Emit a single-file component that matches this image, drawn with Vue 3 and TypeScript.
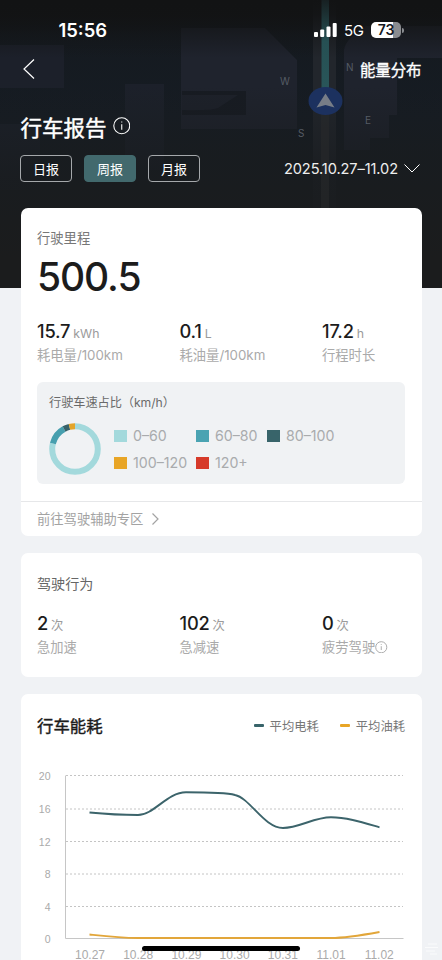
<script setup lang="ts">
interface Stat {
  value: string
  unit: string
  label: string
  info?: boolean
}

const periods = ['日报', '周报', '月报']
const active = '周报'

const mileage: Stat[] = [
  { value: '15.7', unit: 'kWh', label: '耗电量/100km' },
  { value: '0.1', unit: 'L', label: '耗油量/100km' },
  { value: '17.2', unit: 'h', label: '行程时长' },
]

const behaviour: Stat[] = [
  { value: '2', unit: '次', label: '急加速' },
  { value: '102', unit: '次', label: '急减速' },
  { value: '0', unit: '次', label: '疲劳驾驶', info: true },
]

const speeds = [
  { label: '0–60', tone: 'pale' },
  { label: '60–80', tone: 'teal' },
  { label: '80–100', tone: 'deep' },
  { label: '100–120', tone: 'amber' },
  { label: '120+', tone: 'red' },
]

const ring = [
  { tone: 'pale', length: 79, start: 0 },
  { tone: 'teal', length: 13, start: 79 },
  { tone: 'deep', length: 4, start: 92 },
  { tone: 'amber', length: 4, start: 96 },
]

const ticks = [
  { label: '20', y: 15.5 },
  { label: '16', y: 49 },
  { label: '12', y: 81.5 },
  { label: '8', y: 114 },
  { label: '4', y: 146.5 },
  { label: '0', y: 178.5 },
]

const days = ['10.27', '10.28', '10.29', '10.30', '10.31', '11.01', '11.02']
const dayX = (i: number) => 69 + i * 48.2
</script>

<template>
  <div class="screen">
    <header class="hero">
      <svg class="map" viewBox="0 0 442 288" aria-hidden="true">
        <defs>
          <linearGradient id="shade" x1="0" y1="0" x2="0" y2="1">
            <stop offset="0" stop-color="#121314" />
            <stop offset="0.12" stop-color="#151a20" />
            <stop offset="0.4" stop-color="#161c23" />
            <stop offset="0.65" stop-color="#181c20" />
            <stop offset="1" stop-color="#1c1c1d" />
          </linearGradient>
          <linearGradient id="fade" x1="0" y1="0" x2="0" y2="1">
            <stop offset="0" stop-color="#121314" />
            <stop offset="0.05" stop-color="#121314" stop-opacity=".9" />
            <stop offset="0.2" stop-color="#121314" stop-opacity="0" />
            <stop offset="0.3" stop-color="#191c1f" stop-opacity="0" />
            <stop offset="0.62" stop-color="#191c1f" stop-opacity=".85" />
            <stop offset="0.9" stop-color="#1b1c1d" stop-opacity="1" />
          </linearGradient>
          <linearGradient id="route" x1="0" y1="0" x2="0" y2="1">
            <stop offset="0" stop-color="#172022" />
            <stop offset="0.45" stop-color="#265053" />
            <stop offset="1" stop-color="#29565a" />
          </linearGradient>
        </defs>
        <rect width="442" height="288" fill="url(#shade)" />
        <g fill="#1f232d">
          <path d="M0 45H64V88H0zM125 84H164V170H125zM0 124H40V190H0z" opacity=".75" />
          <path d="M181 28H265L297 60V129H181z" />
          <path d="M344 50Q345 39 366 26H442V58H397V115H389V138H370V150H344z" />
        </g>
        <path d="M182 91H246V115H182z" fill="#171b22" />
        <path d="M182 95H238L218 108Q210 111 182 110z" fill="#1d212a" />
        <path d="M313 0H336V288H313z" fill="#22262c" />
        <rect width="442" height="288" fill="url(#fade)" />
        <path d="M321.500 0H329V92H321.500z" fill="url(#route)" />
        <path d="M321 114H329V208H321z" fill="#28292c" opacity=".6" />
        <ellipse cx="325.500" cy="101" rx="17" ry="14" fill="#1c315f" />
        <path d="M325.500 93.500L334.500 107.500L325.500 105L316.500 107.500z" fill="#777d87" />
        <g class="compass">
          <text x="280" y="85">W</text>
          <text x="346" y="71">N</text>
          <text x="298" y="137">S</text>
          <text x="365" y="124">E</text>
        </g>
      </svg>

      <div class="status">
        <span class="clock">15:56</span>
        <svg class="signal" viewBox="0 0 23 14">
          <rect x="0" y="9" width="4" height="5" rx="1" />
          <rect x="6.200" y="6.500" width="4" height="7.500" rx="1" />
          <rect x="12.500" y="3.500" width="4" height="10.500" rx="1" />
          <rect x="18.700" y="0" width="4" height="14" rx="1" />
        </svg>
        <span class="network">5G</span>
        <span class="battery">73</span>
        <span class="cap"></span>
      </div>

      <nav class="nav">
        <svg class="back" viewBox="0 0 12 20"><path d="M11 .500L1 10L11 19.500" /></svg>
        <span class="nav-link">能量分布</span>
      </nav>

      <div class="heading">
        <h1>行车报告</h1>
        <svg class="info light" viewBox="0 0 18 18">
          <circle cx="9" cy="9" r="8.200" />
          <path d="M9 4.500V5.700M9 7.500V13" />
        </svg>
      </div>

      <div class="filters">
        <button v-for="p in periods" :key="p" class="pill" :class="{ on: p === active }">{{ p }}</button>
        <span class="range">2025.10.27–11.02</span>
        <svg class="down" viewBox="0 0 16 9"><path d="M.500 .500L8 8L15.500 .500" /></svg>
      </div>
    </header>

    <main class="cards">
      <section class="card distance">
        <div class="caption">行驶里程</div>
        <div class="total">500.5</div>
        <div class="stats">
          <div v-for="s in mileage" :key="s.label" class="stat">
            <div class="figure"><b>{{ s.value }}</b><span>{{ s.unit }}</span></div>
            <div class="label">{{ s.label }}</div>
          </div>
        </div>
        <div class="panel">
          <div class="panel-title">行驶车速占比（km/h）</div>
          <div class="share">
            <svg class="donut" viewBox="0 0 52 52">
              <circle
                v-for="r in ring"
                :key="r.tone"
                :class="r.tone"
                cx="26"
                cy="26"
                r="22.800"
                pathLength="100"
                :stroke-dasharray="`${r.length} ${100 - r.length}`"
                :stroke-dashoffset="-r.start"
              />
            </svg>
            <div class="keys">
              <div v-for="s in speeds" :key="s.label" class="key">
                <i :class="s.tone"></i><span>{{ s.label }}</span>
              </div>
            </div>
          </div>
        </div>
        <div class="more">
          <span>前往驾驶辅助专区</span>
          <svg viewBox="0 0 7 12"><path d="M.500 .500L6 6L.500 11.500" /></svg>
        </div>
      </section>

      <section class="card behaviour">
        <h2>驾驶行为</h2>
        <div class="stats">
          <div v-for="s in behaviour" :key="s.label" class="stat">
            <div class="figure"><b>{{ s.value }}</b><span>{{ s.unit }}</span></div>
            <div class="label">
              {{ s.label }}<svg v-if="s.info" class="info" viewBox="0 0 18 18">
                <circle cx="9" cy="9" r="8" />
                <path d="M9 4.500V5.700M9 7.500V13" />
              </svg>
            </div>
          </div>
        </div>
      </section>

      <section class="card energy">
        <div class="energy-head">
          <h3>行车能耗</h3>
          <span class="series"><i class="deep"></i>平均电耗</span>
          <span class="series"><i class="amber"></i>平均油耗</span>
        </div>
        <svg class="chart" viewBox="0 0 401 206">
          <g v-for="t in ticks" :key="t.label">
            <line v-if="t.label !== '0'" class="grid" x1="45" x2="382" :y1="t.y" :y2="t.y" />
            <text class="tick" x="29.500" :y="t.y + 4">{{ t.label }}</text>
          </g>
          <path class="axis" d="M44.500 15.500V178.500H382.500" />
          <path class="line fuel" d="M68.500 174.500C82 176 98 178 117 178H310C325 178 342 175 358.500 172" />
          <path
            class="line power"
            d="M68.500 52.500C84 54 100 55 117 55C133 55 146 32.300 165 32.300C182 32.300 205 32.500 214 35C229 38 243 68 262 68C278 68 293 57.300 310 57.300C326 57.300 342 62.500 358.500 67.300"
          />
          <text v-for="(d, i) in days" :key="d" class="day" :x="dayX(i)" y="198.500">{{ d }}</text>
        </svg>
      </section>
    </main>

    <svg class="corner" viewBox="0 0 14 12"><path d="M3 1H12M0 4.500H13M1 8H10M5 11H12" /></svg>
    <div class="home"></div>
  </div>
</template>

<style>
body {
  margin: 0;
  overflow: hidden;
}
</style>

<style scoped>
.screen {
  position: relative;
  width: 442px;
  height: 960px;
  overflow: hidden;
  background: #f0f2f5;
  color: #1c1c1c;
  font-family: Inter, "Noto Sans CJK SC", sans-serif;
}
h1, h2, h3 {
  margin: 0;
}
.hero {
  position: relative;
  box-sizing: border-box;
  height: 288px;
  color: #fff;
}
.map {
  position: absolute;
  inset: 0;
  width: 442px;
  height: 288px;
}
.compass {
  fill: #555b64;
  font-size: 10px;
}
.status, .nav, .heading, .filters {
  position: relative;
  display: flex;
  align-items: center;
  box-sizing: border-box;
}
.status {
  height: 50px;
  padding: 10px 38px 0 58.5px;
}
.clock {
  flex: 1;
  font-size: 18.4px;
  font-weight: 600;
}
.signal {
  width: 23px;
  height: 14px;
  margin-right: 7px;
  fill: #fff;
}
.network {
  width: 20px;
  margin-right: 7px;
  padding-top: 1px;
  font-size: 15px;
  letter-spacing: -0.4px;
}
.battery {
  width: 30px;
  height: 16px;
  border-radius: 5px;
  background: linear-gradient(90deg, #fff 73%, #8a8c90 73%);
  color: #15191e;
  font-size: 14px;
  font-weight: 600;
  line-height: 16px;
  text-align: center;
}
.cap {
  width: 2px;
  height: 5px;
  margin-left: 1px;
  border-radius: 0 2px 2px 0;
  background: #8a8c90;
}
.nav {
  justify-content: space-between;
  height: 38px;
  padding: 0 20.5px 0 23px;
}
.back {
  width: 12px;
  height: 20px;
}
.back path, .down path, .more path {
  fill: none;
  stroke: currentColor;
  stroke-width: 1.2;
}
.nav-link {
  font-size: 15.4px;
  -webkit-text-stroke: 0.35px currentColor;
}
.heading {
  height: 67px;
  padding: 9px 0 0 20.5px;
}
h1 {
  font-size: 21.5px;
  font-weight: 400;
  -webkit-text-stroke: 0.45px currentColor;
}
.info {
  fill: none;
  stroke: currentColor;
  stroke-width: 1.4;
}
.info.light {
  width: 17.5px;
  height: 17.5px;
  margin-left: 6px;
  stroke-width: 1.1;
}
.filters {
  height: 27px;
  padding: 0 22px 0 20px;
}
.pill {
  box-sizing: border-box;
  width: 52px;
  height: 27px;
  margin: 0 12px 0 0;
  padding: 0;
  border: 1px solid #a5a8ab;
  border-radius: 4px;
  background: transparent;
  color: #fff;
  font: 13px/24px Inter, "Noto Sans CJK SC", sans-serif;
}
.pill.on {
  border-color: #42696d;
  background: #42696d;
}
.range {
  margin-left: auto;
  color: #eee;
  font-size: 14.6px;
  letter-spacing: -0.1px;
}
.down {
  width: 16px;
  height: 9px;
  margin-left: 6px;
}
.down path {
  stroke-width: 1;
}
.cards {
  position: relative;
  display: flex;
  flex-direction: column;
  gap: 17px;
  margin: -80px 20.5px 0 20.5px;
}
.card {
  box-sizing: border-box;
  border-radius: 7px;
  background: #fff;
}
.distance {
  height: 328px;
  padding: 20px 16.5px 0;
}
.caption {
  height: 20px;
  color: #777;
  font-size: 13.3px;
  line-height: 20px;
}
.total {
  height: 58px;
  font-size: 39px;
  font-weight: 500;
  line-height: 58px;
  letter-spacing: -1.1px;
}
.stats {
  display: grid;
  grid-template-columns: 142.5px 142.5px 1fr;
}
.distance .stats {
  padding-top: 13px;
}
.figure {
  display: flex;
  align-items: baseline;
  gap: 3px;
  height: 25px;
  line-height: 25px;
}
.figure b {
  font-size: 18.3px;
  font-weight: 500;
  letter-spacing: -0.2px;
}
.figure span {
  color: #9b9b9b;
  font-size: 12.3px;
}
.label {
  display: flex;
  align-items: center;
  height: 22px;
  color: #aaa;
  font-size: 13.3px;
  line-height: 22px;
  white-space: nowrap;
}
.label .info {
  width: 12.5px;
  height: 12.5px;
}
.panel {
  box-sizing: border-box;
  height: 102px;
  margin-top: 16px;
  padding: 11px 12px 0;
  border-radius: 6px;
  background: #f0f2f4;
}
.panel-title {
  height: 20px;
  color: #6a6a6a;
  font-size: 12.2px;
  line-height: 20px;
  letter-spacing: -0.05px;
}
.share {
  display: flex;
  align-items: center;
  padding-top: 10px;
}
.donut {
  width: 52px;
  height: 52px;
  margin-right: 13px;
  transform: rotate(-90deg);
}
.donut circle {
  fill: none;
  stroke-width: 6;
}
.donut .pale { stroke: #a3d9dc; }
.donut .teal { stroke: #479fae; }
.donut .deep { stroke: #386269; }
.donut .amber { stroke: #e4a52a; }
.keys {
  display: grid;
  grid-template-columns: 82px 71px 80px;
  row-gap: 7px;
}
.key {
  display: flex;
  align-items: center;
  gap: 6px;
  height: 20px;
  color: #a9abad;
  font-size: 14.2px;
  line-height: 20px;
  white-space: nowrap;
}
.key i {
  width: 13px;
  height: 12px;
}
i.pale { background: #a3d9dc; }
i.teal { background: #4aa3b2; }
i.deep { background: #38646a; }
i.amber { background: #e8a526; }
i.red { background: #d63a2a; }
.more {
  display: flex;
  align-items: center;
  gap: 9px;
  box-sizing: border-box;
  height: 34px;
  margin: 17px -16.5px 0;
  padding-left: 16.5px;
  border-top: 1px solid #e6e7e9;
  color: #a3a3a3;
  font-size: 13.3px;
}
.more svg {
  width: 7px;
  height: 12px;
}
.behaviour {
  height: 124px;
  padding: 20px 16.5px 0;
}
h2 {
  height: 22px;
  color: #666;
  font-size: 14.1px;
  font-weight: 400;
  line-height: 22px;
}
.behaviour .stats {
  padding-top: 16px;
}
.energy {
  height: 290px;
}
.energy-head {
  display: flex;
  align-items: center;
  height: 62px;
  padding: 0 16.5px;
  margin-bottom: 4px;
}
h3 {
  flex: 1;
  font-size: 16.4px;
  font-weight: 400;
  -webkit-text-stroke: 0.4px currentColor;
}
.series {
  display: flex;
  align-items: center;
  margin-left: 21px;
  padding-top: 1px;
  color: #777;
  font-size: 12.3px;
}
.series i {
  width: 10px;
  height: 3px;
  margin-right: 6px;
  border-radius: 1px;
}
.chart {
  display: block;
  width: 401px;
  height: 206px;
}
.grid {
  stroke: #c4c4c4;
  stroke-dasharray: 2 2;
}
.axis {
  fill: none;
  stroke: #c6c6c6;
}
.line {
  fill: none;
  stroke-width: 1.9;
}
.power { stroke: #3c646b; }
.fuel { stroke: #e2a63a; }
.tick, .day {
  fill: #aaa;
  font-family: "Liberation Sans", sans-serif;
}
.tick {
  font-size: 10.5px;
  text-anchor: end;
}
.day {
  font-size: 12px;
  text-anchor: middle;
}
.home {
  position: absolute;
  left: 142px;
  bottom: 9px;
  width: 158px;
  height: 5px;
  border-radius: 3px;
  background: #000;
}
.corner {
  position: absolute;
  right: 3px;
  bottom: 5px;
  width: 14px;
  height: 12px;
  fill: none;
  stroke: #fafbfc;
}
</style>
